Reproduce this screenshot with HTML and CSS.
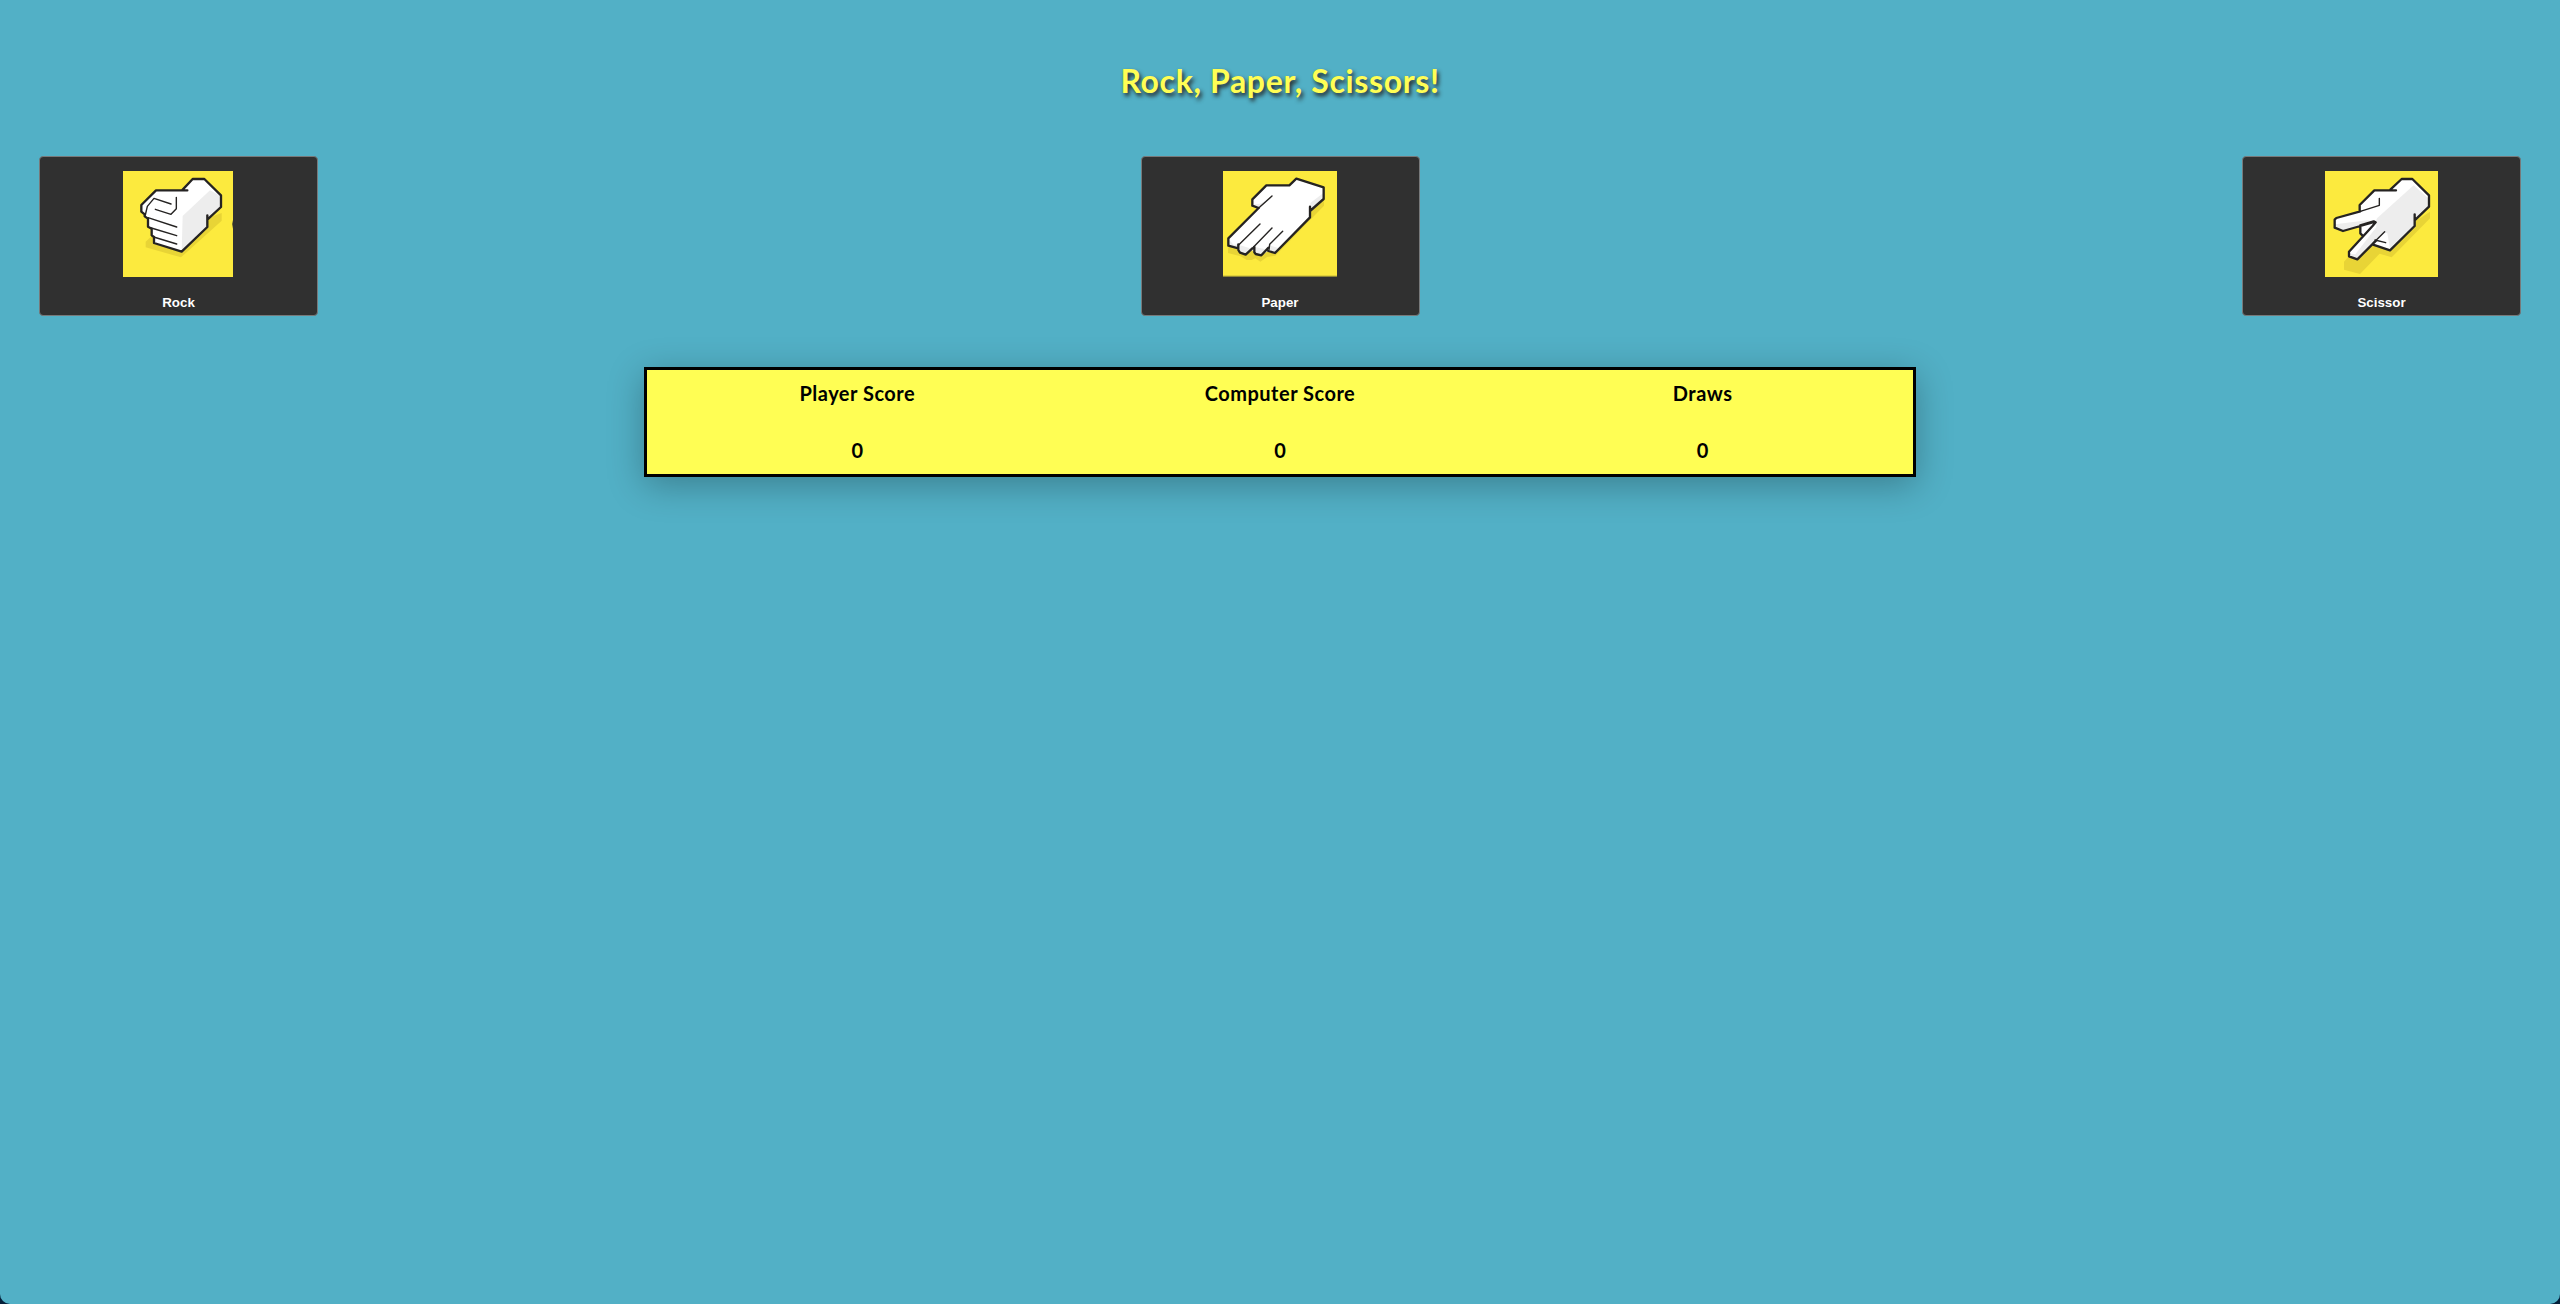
FILE: index.html
```html
<!DOCTYPE html>
<html lang="en">
<head>
<meta charset="utf-8">
<title>Rock, Paper, Scissors!</title>
<link rel="stylesheet" href="styles.css">
</head>
<body>
<main class="page">
  <h1 class="title">Rock, Paper, Scissors!</h1>
  <div class="choices">
    <button class="choice">
      <svg class="hand rock" width="110" height="106" viewBox="69 48 330 318">
        <rect class="tile" x="69" y="48" width="330" height="318"/>
        <path class="shade" d="M158 241L137 260V277L243 307L365 197V174L322 190Z"/>
        <path class="skin" d="M246 106L278 72H313L363 121V156L322 193V216L245 290L164 266L160 246L154 241L152 220L144 214V190L134 180V174L124 170V150L168 106Z"/>
        <path class="side" d="M248 183L330 106L363 124V156L322 193V216L245 288Z"/>
        <path class="outline" d="M262 106H168L124 150V170L134 178V184L144 191V215L155 221V241L162 246V264L245 290L322 216V181M322 194L363 156V121L313 72H278L246 106"/>
        <path class="crease" d="M136 180L142 154L162 130L213 147M229 127V161L213 178L166 163M144 188L230 216M154 219L230 242M161 246L230 267"/>
        <path class="speck" d="M399 195Q394 208 399 222Z"/>
      </svg>
      <span class="label">Rock</span>
    </button>
    <button class="choice">
      <svg class="hand" width="114" height="106" viewBox="69 48 342 318">
        <rect class="tile" x="69" y="48" width="342" height="318"/>
        <path class="edge" d="M69 364H411"/>
        <path class="shade" d="M84 278V294L122 304L140 315H155L166 310L181 320L201 306L226 302L372 152V138L330 170Z"/>
        <path class="skin" d="M199 91H268L289 71L371 97V132L330 168V187L225 294L205 288L184 301L163 295L157 286L137 299L118 291L115 280L85 272V250L176 159L157 152V133Z"/>
        <path class="side" d="M371 113V132L331 168V144ZM157 149L170 154H182L199 137L180 146ZM86 253V272L113 280L120 266L101 270ZM121 271L118 290L136 298L150 280ZM165 276V293L183 300L196 283ZM209 271V287L225 293L235 279Z"/>
        <path class="outline" d="M176 159L157 152V133L199 91H268L289 71L371 97V132L330 168M330 155V187L225 294L205 288M176 159L85 250V272L115 280M115 268V285L120 293L137 299L157 280M163 276V292L167 297L184 301L205 278"/>
        <path class="crease" d="M176 159L216 123M115 271L180 207M160 277L216 219M207 284L209 268L248 229"/>
      </svg>
      <span class="label">Paper</span>
    </button>
    <button class="choice">
      <svg class="hand" width="113" height="106" viewBox="75 48 339 318">
        <rect class="tile" x="75" y="48" width="339" height="318"/>
        <path class="shade" d="M148 302L132 320V344L180 357L239 296L275 307L390 190V170L344 200L271 281L220 266Z"/>
        <path class="skin" d="M271 106L305 72H337L387 121V155L344 196V215L270 286L217 268L172 313L147 304V290L184 246L181 214L129 228L104 218V193L181 169V149L223 106Z"/>
        <path class="side" d="M202 196L226 200L232 189L341 91L386 131V155L344 196V215L270 285L218 266L172 311L148 303V296L166 298L229 217V203L132 226L105 217V208Z"/>
        <path class="skin" d="M228 255L251 233L262 235L267 263L270 283L220 267Z"/>
        <path class="outline" d="M288 106H223L179 150V168M181 169L109 189L104 194V218L129 228L223 201M271 104L305 72H337L387 121V155L344 196M344 178V213L270 286L217 268M181 214V235L187 241M228 257L172 313L147 304V290L217 214L227 202L221 199L181 211"/>
        <path class="crease" d="M238 130V151L181 169M254 230L220 264M225 255L257 263"/>
      </svg>
      <span class="label">Scissor</span>
    </button>
  </div>
  <section class="scores">
    <div class="score"><h2 class="name">Player Score</h2><p class="value">0</p></div>
    <div class="score"><h2 class="name">Computer Score</h2><p class="value">0</p></div>
    <div class="score"><h2 class="name">Draws</h2><p class="value">0</p></div>
  </section>
</main>
</body>
</html>
```
FILE: styles.css
```css
* { box-sizing: border-box; }
html { background: #05203a; }
body { margin: 0; background: #05203a; font-family: Lato, sans-serif; }
.page {
  height: 1304px;
  padding: 61px 39px 0;
  background: #52b0c6;
  border-radius: 0 0 10px 10px;
  overflow: hidden;
}
.title {
  margin: 0;
  height: 95px;
  line-height: 40px;
  font-size: 32px;
  font-weight: 700;
  letter-spacing: 0.65px;
  text-align: center;
  color: #fffe54;
  text-shadow: 2px 3px 4px #222;
}
.choices { display: flex; justify-content: space-between; }
.choice {
  display: flex;
  flex-direction: column;
  align-items: center;
  width: 279px;
  height: 160px;
  padding: 14px 0 0;
  border: 1px solid #77797a;
  border-radius: 4px;
  background: #303030;
}
.hand { display: block; }
.rock { margin-right: 2px; }
.label {
  margin-top: 18px;
  font: 700 13.333px/16px "Liberation Sans", sans-serif;
  color: #fff;
}
.tile { fill: #fcea3e; }
.edge { fill: none; stroke: #8f8735; stroke-width: 4; }
.shade { fill: #e8d436; }
.skin { fill: #fff; }
.side { fill: #ededed; }
.speck { fill: #303030; }
.outline, .crease { fill: none; stroke: #252322; stroke-linejoin: round; stroke-linecap: round; }
.outline { stroke-width: 7; }
.crease { stroke-width: 4.2; }
.scores {
  display: grid;
  grid-template-columns: repeat(3, 1fr);
  column-gap: 2px;
  width: 1272px;
  height: 110px;
  margin: 51px auto 0;
  border: 3px solid #000;
  background: #fffe54;
  box-shadow: 0 8px 36px rgba(0, 0, 0, 0.28);
}
.score { display: flex; flex-direction: column; align-items: center; padding-top: 11px; color: #000; }
.name { margin: 0; font-size: 20px; line-height: 24px; font-weight: 700; letter-spacing: 0.5px; }
.value { margin: 33px 0 0; font-size: 20px; line-height: 24px; font-weight: 700; }
```
